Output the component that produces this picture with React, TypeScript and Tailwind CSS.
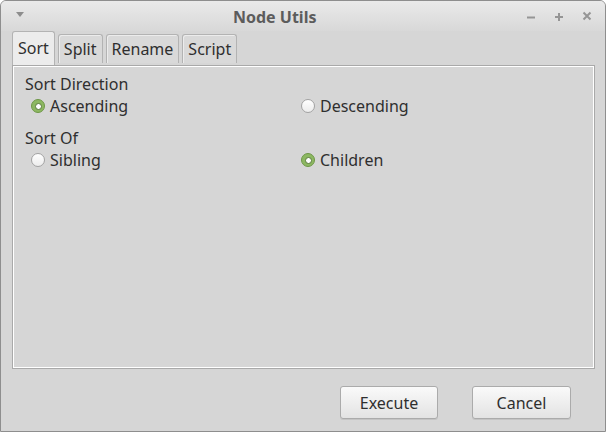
import React from "react";

const font = { fontFamily: '"Noto Sans", "Open Sans", sans-serif' };

function Radio({ checked, label }: { checked?: boolean; label: string }) {
  return (
    <div className="flex items-center h-[22px]">
      {checked ? (
        <div className="w-[14px] h-[14px] rounded-full bg-[#8db862] border border-[#6e9747] flex items-center justify-center">
          <div className="w-[7px] h-[7px] rounded-full bg-white border border-[#58793a]" />
        </div>
      ) : (
        <div className="w-[14px] h-[14px] rounded-full bg-gradient-to-b from-[#ffffff] to-[#ececec] border border-[#a3a3a3]" />
      )}
      <span className="ml-[5px] text-[16px] text-[#2f2f2f] leading-[22px]">{label}</span>
    </div>
  );
}

function Tab({ label, active }: { label: string; active?: boolean }) {
  if (active) {
    return (
      <div className="h-[34px] px-[5px] pt-[3px] bg-[#ececec] border border-b-0 border-[#b3b3b3] rounded-t-[3px] text-[16px] text-[#2f2f2f] leading-[26px] relative z-10 -mb-px">
        {label}
      </div>
    );
  }
  return (
    <div className="h-[29px] mt-[3px] px-[5px] pt-[1px] bg-[#d9d9d9] border border-b-0 border-[#b3b3b3] rounded-t-[3px] shadow-[inset_1px_1px_0_#ececec] text-[16px] text-[#2f2f2f] leading-[27px]">
      {label}
    </div>
  );
}

function Btn({ label, w }: { label: string; w: string }) {
  return (
    <div
      className={`${w} h-[33px] rounded-[3px] border border-[#ababab] bg-gradient-to-b from-[#fafafa] to-[#e3e3e3] shadow-[0_1px_0_#c4c4c4] flex items-center justify-center text-[16px] text-[#2f2f2f]`}
    >
      {label}
    </div>
  );
}

export default function App() {
  return (
    <div style={font} className="w-[606px] h-[432px] bg-[#d6d6d6] border border-[#8e8e8e] rounded-t-[6px] flex flex-col overflow-hidden">
      {/* title bar */}
      <div className="h-[30px] relative flex items-center bg-gradient-to-b from-[#eaeaea] to-[#d8d8d8]">
        <svg className="absolute left-[14px] top-[10px]" width="10" height="7" viewBox="0 0 10 7">
          <path d="M1 1 L9 1 L5 6 Z" fill="#8d8d8d" />
        </svg>
        <span className="ml-[232px] text-[16px] font-bold text-[#5c5c5c] leading-none mt-[1px]">Node Utils</span>
        <svg className="absolute left-[525px] top-[11px]" width="10" height="10" viewBox="0 0 10 10">
          <path d="M1 5.5 H9" stroke="#959595" strokeWidth="2" />
        </svg>
        <svg className="absolute left-[553px] top-[11px]" width="10" height="10" viewBox="0 0 10 10">
          <path d="M1 5 H9 M5 1 V9" stroke="#959595" strokeWidth="2" />
        </svg>
        <svg className="absolute left-[581px] top-[10px]" width="10" height="10" viewBox="0 0 10 10">
          <path d="M1.5 1.5 L8.5 8.5 M8.5 1.5 L1.5 8.5" stroke="#959595" strokeWidth="2" />
        </svg>
      </div>

      {/* tabs */}
      <div className="flex items-start gap-[3px] pl-[11px] h-[34px]">
        <Tab label="Sort" active />
        <Tab label="Split" />
        <Tab label="Rename" />
        <Tab label="Script" />
      </div>

      {/* panel */}
      <div className="ml-[11px] w-[583px] h-[304px] border border-[#a9a9a9] shadow-[inset_0_0_0_1px_#ffffff] bg-[#d6d6d6] pt-[7px] pl-[12px] text-[#2f2f2f]">
        <div className="text-[16px] leading-[22px]">Sort Direction</div>
        <div className="flex pl-[6px]">
          <div className="w-[270px]">
            <Radio checked label="Ascending" />
          </div>
          <Radio label="Descending" />
        </div>
        <div className="text-[16px] leading-[22px] mt-[10px]">Sort Of</div>
        <div className="flex pl-[6px]">
          <div className="w-[270px]">
            <Radio label="Sibling" />
          </div>
          <Radio checked label="Children" />
        </div>
      </div>

      {/* buttons */}
      <div className="flex justify-end gap-[34px] pr-[34px] mt-[17px]">
        <Btn label="Execute" w="w-[98px]" />
        <Btn label="Cancel" w="w-[99px]" />
      </div>
    </div>
  );
}
